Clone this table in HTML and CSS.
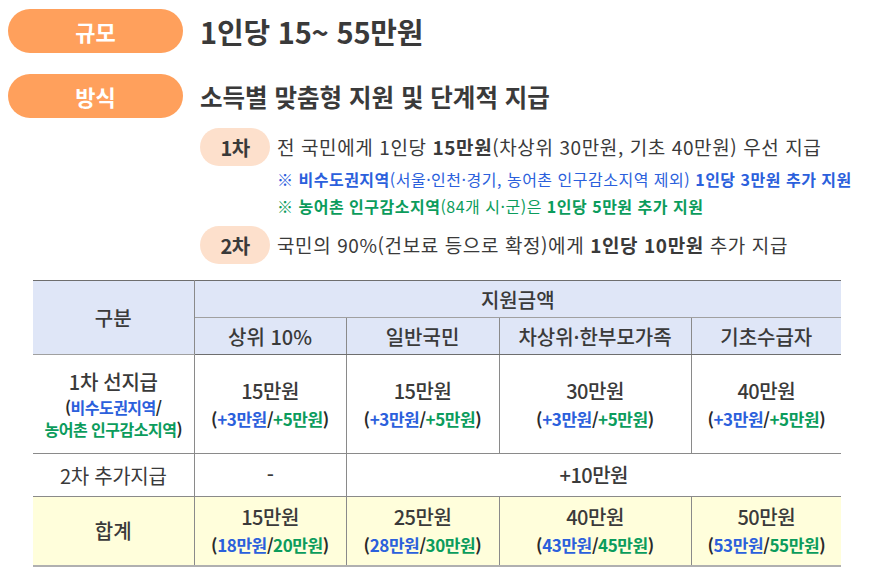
FILE: index.html
```html
<!DOCTYPE html>
<html lang="ko">
<head>
<meta charset="utf-8">
<link rel="stylesheet" href="styles.css">
</head>
<body>
<div class="page">
  <div class="summary">
    <div class="sum-row">
      <span class="pill">규모</span>
      <span class="sum-title big">1인당 15~ 55만원</span>
    </div>
    <div class="sum-row">
      <span class="pill">방식</span>
      <span class="sum-title">소득별 맞춤형 지원 및 단계적 지급</span>
    </div>
  </div>

  <div class="steps">
    <div class="step">
      <span class="step-pill">1차</span>
      <div class="step-body">
        <p class="step-main">전 국민에게 1인당 <b>15만원</b>(차상위 30만원, 기초 40만원) 우선 지급</p>
        <p class="note blue"><b>※ 비수도권지역</b>(서울·인천·경기, 농어촌 인구감소지역 제외) <b>1인당 3만원 추가 지원</b></p>
        <p class="note green"><b>※ 농어촌 인구감소지역</b>(84개 시·군)은 <b>1인당 5만원 추가 지원</b></p>
      </div>
    </div>
    <div class="step">
      <span class="step-pill">2차</span>
      <div class="step-body">
        <p class="step-main">국민의 90%(건보료 등으로 확정)에게 <b>1인당 10만원</b> 추가 지급</p>
      </div>
    </div>
  </div>

  <table class="grid">
    <colgroup>
      <col class="c1"><col class="c2"><col class="c3"><col class="c4"><col class="c5">
    </colgroup>
    <thead>
      <tr class="h1">
        <th rowspan="2" class="gubun">구분</th>
        <th colspan="4">지원금액</th>
      </tr>
      <tr class="h2">
        <th>상위 10%</th>
        <th>일반국민</th>
        <th>차상위·한부모가족</th>
        <th>기초수급자</th>
      </tr>
    </thead>
    <tbody>
      <tr class="r1">
        <td class="label">
          <div class="lab-main">1차 선지급</div>
          <div class="sub lsub">(<span class="blue">비수도권지역</span>/</div>
          <div class="sub lsub"><span class="green">농어촌 인구감소지역</span>)</div>
        </td>
        <td><div class="amt">15만원</div><div class="sub">(<span class="blue">+3만원</span>/<span class="green">+5만원</span>)</div></td>
        <td><div class="amt">15만원</div><div class="sub">(<span class="blue">+3만원</span>/<span class="green">+5만원</span>)</div></td>
        <td><div class="amt">30만원</div><div class="sub">(<span class="blue">+3만원</span>/<span class="green">+5만원</span>)</div></td>
        <td><div class="amt">40만원</div><div class="sub">(<span class="blue">+3만원</span>/<span class="green">+5만원</span>)</div></td>
      </tr>
      <tr class="r2">
        <td class="label plain">2차 추가지급</td>
        <td class="amt">-</td>
        <td colspan="3" class="amt">+10만원</td>
      </tr>
      <tr class="r3">
        <td class="label total">합계</td>
        <td><div class="amt">15만원</div><div class="sub">(<span class="blue">18만원</span>/<span class="green">20만원</span>)</div></td>
        <td><div class="amt">25만원</div><div class="sub">(<span class="blue">28만원</span>/<span class="green">30만원</span>)</div></td>
        <td><div class="amt">40만원</div><div class="sub">(<span class="blue">43만원</span>/<span class="green">45만원</span>)</div></td>
        <td><div class="amt">50만원</div><div class="sub">(<span class="blue">53만원</span>/<span class="green">55만원</span>)</div></td>
      </tr>
    </tbody>
  </table>
</div>
</body>
</html>
```

FILE: styles.css
```css
* { box-sizing: border-box; }
html, body { margin: 0; padding: 0; background: #ffffff; }
body {
  font-family: "Noto Sans CJK KR", "Noto Sans", sans-serif;
  color: #3a3a3a;
}
.page { width: 870px; height: 582px; overflow: hidden; }

.summary {
  padding: 9px 0 0 8px;
  display: flex;
  flex-direction: column;
  gap: 21px;
}
.sum-row { display: flex; align-items: center; gap: 17px; }
.pill {
  width: 175px;
  height: 44px;
  border-radius: 22px;
  background: #ffa05c;
  color: #ffffff;
  font-weight: 700;
  font-size: 22px;
  display: flex;
  align-items: center;
  justify-content: center;
}
.sum-title { font-size: 24.5px; font-weight: 700; color: #3a3a3a; letter-spacing: 0; }
.sum-title.big { font-size: 29px; letter-spacing: -0.2px; }

.steps {
  margin: 10px 0 0 200px;
  display: flex;
  flex-direction: column;
  gap: 6px;
}
.step { display: flex; align-items: flex-start; gap: 7px; }
.step-pill {
  flex: none;
  width: 70px;
  height: 38px;
  border-radius: 19px;
  background: #fde0cc;
  color: #3a3a3a;
  font-weight: 700;
  font-size: 20px;
  display: flex;
  align-items: center;
  justify-content: center;
  letter-spacing: -0.5px;
}
.step-body { display: flex; flex-direction: column; }
.step-body p { margin: 0; }
.step-main { font-size: 19px; line-height: 38px; letter-spacing: 0.6px; }
.step-main b { font-weight: 700; }
.note { font-size: 16px; line-height: 27px; letter-spacing: 0.5px; }
.note b { font-weight: 700; }
.blue { color: #2b60dc; }
.green { color: #0b9c5c; }

.grid {
  margin: 16px 0 0 33px;
  width: 808px;
  border-collapse: collapse;
  table-layout: fixed;
  border-top: 1px solid #6e6e6e;
  border-bottom: 2px solid #b0b0b0;
}
.c1 { width: 161px; }
.c2 { width: 152px; }
.c3 { width: 153px; }
.c4 { width: 192px; }
.c5 { width: 150px; }

.grid th, .grid td {
  padding: 0;
  text-align: center;
  vertical-align: middle;
  border-left: 1px solid #8a8a8a;
  border-right: 1px solid #8a8a8a;
}
.grid tr > :first-child { border-left: none; }
.grid tr > :last-child { border-right: none; }
.grid thead th {
  background: #dfe6f7;
  font-weight: 500;
  font-size: 20px;
  color: #3a3a3a;
  letter-spacing: 0;
}
.grid .h1 th { height: 37px; border-bottom: 1px solid #a0a0a0; }
.grid .h2 th { height: 37px; border-bottom: 1px solid #6e6e6e; }
.grid .gubun { border-bottom: 1px solid #6e6e6e; }

.grid tbody td { border-bottom: 1px solid #8a8a8a; font-size: 20px; }
.grid .r1 td { height: 99px; }
.grid .r2 td { height: 43px; }
.grid .r3 td { height: 69px; background: #fffedb; border-bottom: none; }

.lab-main { font-size: 20px; font-weight: 500; line-height: 28px; letter-spacing: -0.3px; }
.label .lsub { font-size: 16px; line-height: 22px; letter-spacing: -0.5px; }
.label.plain { font-weight: 400; font-size: 20px; letter-spacing: -0.3px; }
.label.total { font-weight: 500; font-size: 20px; }
.amt { font-size: 20px; font-weight: 500; line-height: 28px; letter-spacing: -0.5px; }
.sub { font-size: 17px; font-weight: 700; line-height: 27px; letter-spacing: -0.4px; color: #2a2a2a; }
```
